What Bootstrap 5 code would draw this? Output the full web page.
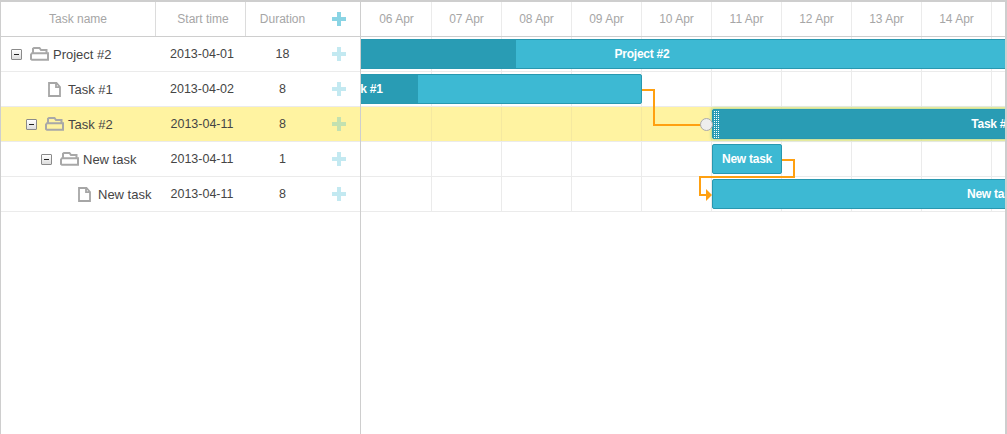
<!DOCTYPE html>
<html lang="en">
<head>
    <meta charset="UTF-8">
    <title>Gantt</title>
    <link href="https://cdn.jsdelivr.net/npm/bootstrap@5.3.0/dist/css/bootstrap.min.css" rel="stylesheet">
    <style>
        html, body { height: 100%; }
        body { font-family: "Liberation Sans", Arial, sans-serif; font-size: 12px; color: #454545; background: #fff; overflow: hidden; }
        .gantt-box { height: 434px; border-top: 2px solid #cecece; border-left: 1px solid #cecece; border-right: 2px solid #cecece; }
        .grid-pane { width: 360px; flex: none; border-right: 1px solid #cecece; }
        .chart-pane { flex: 1 1 0; min-width: 0; overflow: hidden; }
        .head-row { height: 35px; border-bottom: 1px solid #cecece; color: #a6a6a6; }
        .body-row { height: 35px; border-bottom: 1px solid #ebebeb; font-size: 12.5px; }
        .body-row.picked { background: #fff3a1; }
        .col-name { width: 155px; flex: none; }
        .col-start { width: 90px; flex: none; padding-left: 5px; }
        .body-row .col-start { padding-left: 2px; }
        .col-dur { width: 73px; flex: none; }
        .col-add { width: 41px; flex: none; }
        .head-row .col-name, .head-row .col-start { border-right: 1px solid #dcdcdc; }
        .col-name.tree { padding-left: 10px; white-space: nowrap; font-size: 13px; }
        .tree-name { padding-top: 1px; }
        .tree-toggle { width: 11px; height: 11px; flex: none; margin-right: 8px; border: 1px solid #8a8a8a; border-radius: 1px; background: linear-gradient(#fff, #ddd); position: relative; }
        .tree-toggle::after { content: ""; position: absolute; left: 2px; top: 4px; width: 5px; height: 1px; background: #222; }
        .tree-file { width: 19px; height: 15px; flex: none; margin-right: 4px; margin-left: 19px; }
        .tree-folder { width: 19px; height: 14px; flex: none; margin-right: 4px; }
        .plus-ico { width: 14px; height: 14px; display: block; margin-left: 13px; fill: #3db9d3; opacity: .3; }
        .head-row .plus-ico { opacity: .6; }
        .scale-row, .cells-row { margin-left: 1px; width: 700px; }
        .scale-cell, .line-cell { width: 70px; flex: none; border-right: 1px solid #ebebeb; }
        .picked .line-cell { border-right-color: #f5e9a0; }
        .chart-body { position: relative; }
        .cells-row-wrap { height: 35px; border-bottom: 1px solid #ebebeb; }
        .cells-row-wrap.picked { background: #fff3a1; }
        .cells-row { height: 34px; }
        .g-bar { position: absolute; height: 30px; background: #3db9d3; border: 1px solid #2898b0; border-radius: 2px; color: #fff; font-size: 12px; letter-spacing: -.25px; font-weight: 700; overflow: hidden; }
        .g-bar.picked-bar { background: #299cb4; box-shadow: 0 0 3px 1px #b5d99a; overflow: visible; }
        .g-progress { position: absolute; left: 0; top: 0; bottom: 0; background: #299cb4; }
        .g-label { position: relative; text-align: center; line-height: 28px; }
        .g-drag { position: absolute; left: 1px; top: 1px; width: 5px; height: 27px; background: repeating-linear-gradient(90deg, #fff 0 1px, transparent 1px 2px); -webkit-mask-image: repeating-linear-gradient(#000 0 1px, transparent 1px 2px); mask-image: repeating-linear-gradient(#000 0 1px, transparent 1px 2px); }
        .g-links { position: absolute; left: 0; top: 0; width: 644px; height: 175px; pointer-events: none; }
    </style>
</head>
<body>
    <svg width="0" height="0" class="position-absolute">
        <symbol id="ico-plus" viewBox="0 0 14 14"><path d="M5 0h4v5h5v4H9v5H5V9H0V5h5z"/></symbol>
        <symbol id="ico-folder" viewBox="0 0 19 14"><path d="M3 6V1.8L4 1h5.5L11 3h5.5v3M1 7.5 2 6.2h16v6.6H2L1 12z" fill="none" stroke="#a8a8a8" stroke-width="2"/></symbol>
        <symbol id="ico-file" viewBox="0 0 19 15"><path d="M4 1h7.5l3.5 4v9H4zM11 1v4.2h4" fill="none" stroke="#a6a6a6" stroke-width="1.8"/></symbol>
    </svg>

    <div class="gantt-box d-flex">
        <div class="grid-pane">
            <div class="head-row d-flex align-items-center text-center">
                <div class="col-name h-100 d-flex align-items-center justify-content-center">Task name</div>
                <div class="col-start h-100 d-flex align-items-center justify-content-center">Start time</div>
                <div class="col-dur">Duration</div>
                <div class="col-add"><svg class="plus-ico"><use href="#ico-plus"/></svg></div>
            </div>
            <div id="gridRows"></div>
        </div>
        <div class="chart-pane">
            <div class="head-row d-flex"><div class="scale-row d-flex" id="scaleRow"></div></div>
            <div class="chart-body" id="chartBody">
                <svg class="g-links">
                    <polyline points="281,53 293,53 293,88 340,88" fill="none" stroke="#ffa011" stroke-width="2"/>
                    <circle cx="345.5" cy="87.5" r="6" fill="#eee" stroke="#aaa"/>
                    <polyline points="421,123 433,123 433,140 339,140 339,158 346,158" fill="none" stroke="#ffa011" stroke-width="2"/>
                    <polygon points="345,152 351,158 345,164" fill="#ffa011"/>
                </svg>
            </div>
        </div>
    </div>

    <script>
        const days = ["06 Apr", "07 Apr", "08 Apr", "09 Apr", "10 Apr", "11 Apr", "12 Apr", "13 Apr", "14 Apr", ""];
        const tasks = [
            { name: "Project #2", start: "2013-04-01", dur: 18, level: 0, folder: true, left: -349, width: 1260, done: 503 },
            { name: "Task #1", start: "2013-04-02", dur: 8, level: 1, left: -279, width: 560, done: 335 },
            { name: "Task #2", start: "2013-04-11", dur: 8, level: 1, folder: true, left: 351, width: 560, picked: true },
            { name: "New task", start: "2013-04-11", dur: 1, level: 2, folder: true, left: 351, width: 70 },
            { name: "New task", start: "2013-04-11", dur: 8, level: 3, left: 351, width: 560 }
        ];

        document.getElementById("scaleRow").innerHTML = days.map(d =>
            `<div class="scale-cell d-flex align-items-center justify-content-center">${d}</div>`).join("");

        document.getElementById("gridRows").innerHTML = tasks.map(t => `
            <div class="body-row d-flex align-items-center text-center ${t.picked ? "picked" : ""}">
                <div class="col-name tree d-flex align-items-center text-start">
                    <span style="width:${t.level * 15}px" class="flex-shrink-0"></span>
                    ${t.folder
                        ? `<span class="tree-toggle"></span><svg class="tree-folder"><use href="#ico-folder"/></svg>`
                        : `<svg class="tree-file"><use href="#ico-file"/></svg>`}
                    <span class="tree-name">${t.name}</span>
                </div>
                <div class="col-start">${t.start}</div>
                <div class="col-dur">${t.dur}</div>
                <div class="col-add"><svg class="plus-ico"><use href="#ico-plus"/></svg></div>
            </div>`).join("");

        const body = document.getElementById("chartBody");
        const rowsHtml = tasks.map(t => `
            <div class="cells-row-wrap ${t.picked ? "picked" : ""}">
                <div class="cells-row d-flex">${days.map(() => `<div class="line-cell"></div>`).join("")}</div>
            </div>`).join("");
        const barsHtml = tasks.map((t, i) => `
            <div class="g-bar ${t.picked ? "picked-bar" : ""}" style="left:${t.left}px;width:${t.width}px;top:${i * 35 + 2}px">
                ${t.done ? `<div class="g-progress" style="width:${t.done}px"></div>` : ""}
                ${t.picked ? `<div class="g-drag"></div>` : ""}
                <div class="g-label">${t.name}</div>
            </div>`).join("");
        body.insertAdjacentHTML("afterbegin", rowsHtml + barsHtml);
    </script>
</body>
</html>
